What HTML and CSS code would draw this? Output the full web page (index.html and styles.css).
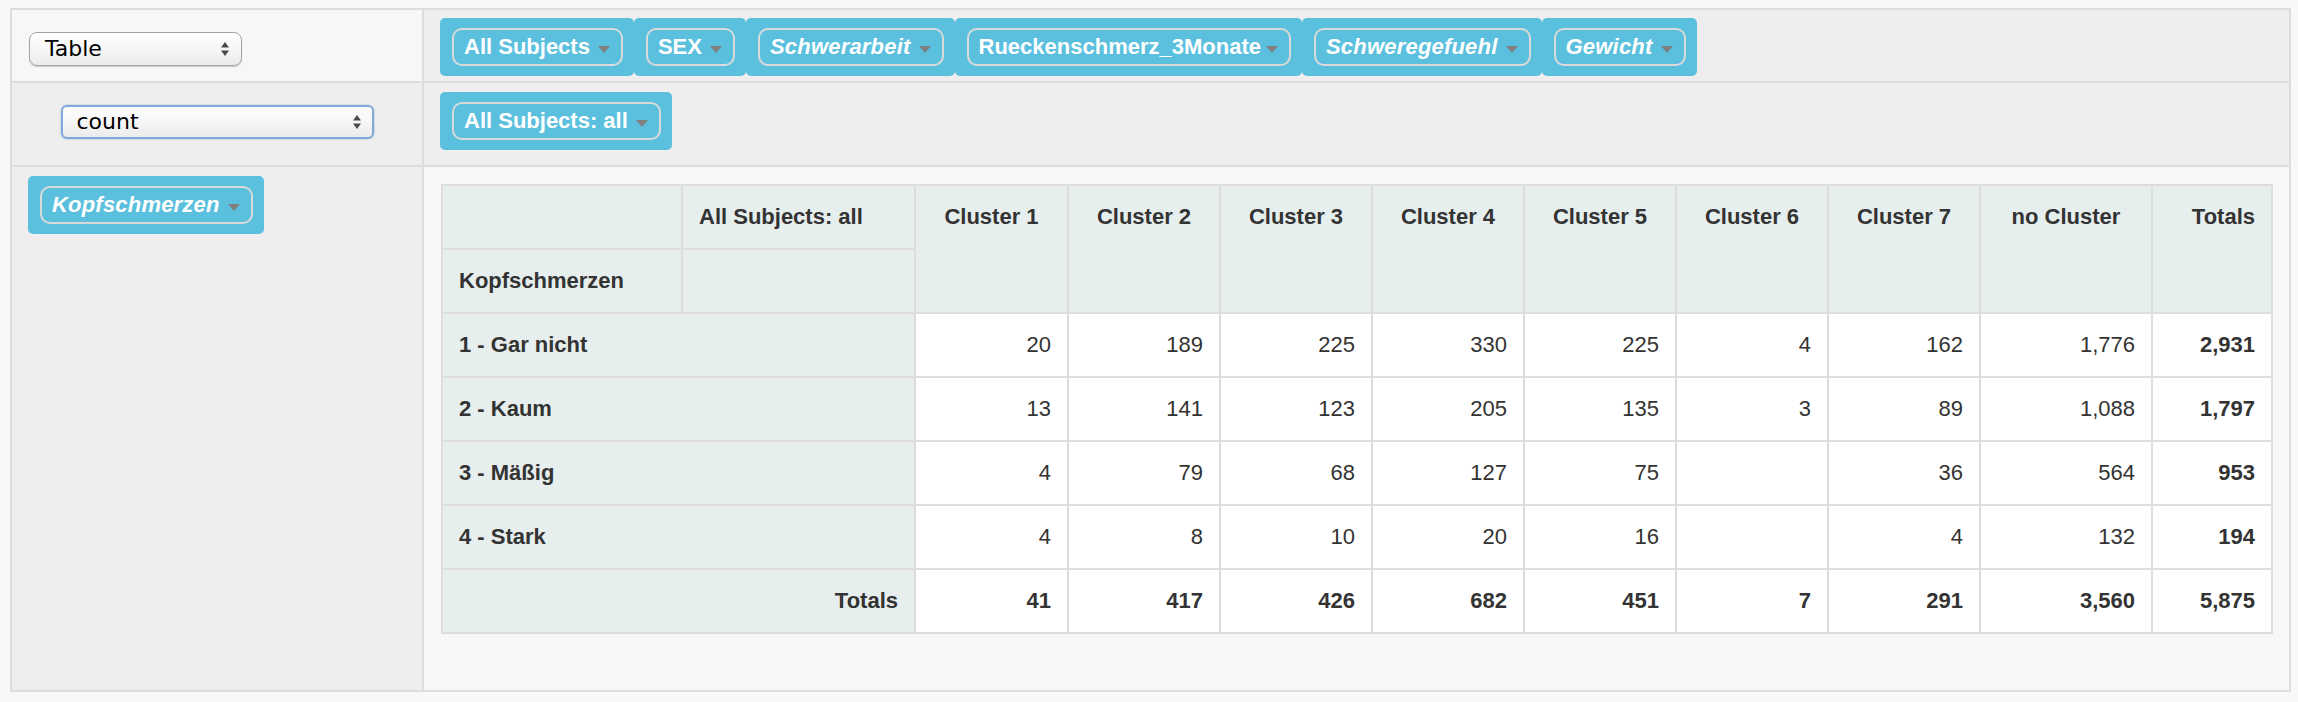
FILE: index.html
```html
<!DOCTYPE html>
<html lang="de">
<head>
<meta charset="utf-8">
<title>Pivot Table</title>
<link rel="stylesheet" href="styles.css">
</head>
<body>
<div class="pvt-ui">
  <div class="cell cell-renderer">
    <div class="select select-renderer">
      <span class="select-text">Table</span>
      <svg class="select-arrows" width="8" height="14" viewBox="0 0 8 14"><polygon points="0,5.5 4,0 8,5.5"/><polygon points="0,8.5 4,14 8,8.5"/></svg>
    </div>
  </div>
  <div class="cell axis axis-unused">
    <ul class="pill-list">
      <li class="pill"><span class="pill-attr">All Subjects<span class="tri"></span></span></li>
      <li class="pill"><span class="pill-attr">SEX<span class="tri"></span></span></li>
      <li class="pill"><span class="pill-attr italic">Schwerarbeit<span class="tri"></span></span></li>
      <li class="pill"><span class="pill-attr tight">Rueckenschmerz_3Monate<span class="tri"></span></span></li>
      <li class="pill"><span class="pill-attr italic">Schweregefuehl<span class="tri"></span></span></li>
      <li class="pill"><span class="pill-attr italic">Gewicht<span class="tri"></span></span></li>
    </ul>
  </div>
  <div class="cell cell-vals">
    <div class="select select-agg">
      <span class="select-text">count</span>
      <svg class="select-arrows" width="8" height="14" viewBox="0 0 8 14"><polygon points="0,5.5 4,0 8,5.5"/><polygon points="0,8.5 4,14 8,8.5"/></svg>
    </div>
  </div>
  <div class="cell axis axis-cols">
    <ul class="pill-list">
      <li class="pill"><span class="pill-attr">All Subjects: all<span class="tri"></span></span></li>
    </ul>
  </div>
  <div class="cell axis axis-rows">
    <ul class="pill-list">
      <li class="pill"><span class="pill-attr italic">Kopfschmerzen<span class="tri"></span></span></li>
    </ul>
  </div>
  <div class="cell renderer-area">
    <div class="pvt-table">
      <div class="th"></div>
      <div class="th">All Subjects: all</div>
      <div class="th col-label">Cluster 1</div>
      <div class="th col-label">Cluster 2</div>
      <div class="th col-label">Cluster 3</div>
      <div class="th col-label">Cluster 4</div>
      <div class="th col-label">Cluster 5</div>
      <div class="th col-label">Cluster 6</div>
      <div class="th col-label">Cluster 7</div>
      <div class="th col-label">no Cluster</div>
      <div class="th col-label total-label">Totals</div>
      <div class="th">Kopfschmerzen</div>
      <div class="th"></div>

      <div class="th row-label">1 - Gar nicht</div>
      <div class="td">20</div><div class="td">189</div><div class="td">225</div><div class="td">330</div><div class="td">225</div><div class="td">4</div><div class="td">162</div><div class="td">1,776</div><div class="td total">2,931</div>

      <div class="th row-label">2 - Kaum</div>
      <div class="td">13</div><div class="td">141</div><div class="td">123</div><div class="td">205</div><div class="td">135</div><div class="td">3</div><div class="td">89</div><div class="td">1,088</div><div class="td total">1,797</div>

      <div class="th row-label">3 - Mäßig</div>
      <div class="td">4</div><div class="td">79</div><div class="td">68</div><div class="td">127</div><div class="td">75</div><div class="td"></div><div class="td">36</div><div class="td">564</div><div class="td total">953</div>

      <div class="th row-label">4 - Stark</div>
      <div class="td">4</div><div class="td">8</div><div class="td">10</div><div class="td">20</div><div class="td">16</div><div class="td"></div><div class="td">4</div><div class="td">132</div><div class="td total">194</div>

      <div class="th row-label total-label">Totals</div>
      <div class="td total">41</div><div class="td total">417</div><div class="td total">426</div><div class="td total">682</div><div class="td total">451</div><div class="td total">7</div><div class="td total">291</div><div class="td total">3,560</div><div class="td total">5,875</div>
    </div>
  </div>
</div>
</body>
</html>
```

FILE: styles.css
```css
html, body {
  background: #f8f8f8;
}
body {
  margin: 8px 0 0 10px;
  font-family: "Liberation Sans", Arial, sans-serif;
  color: #333;
}

.pvt-ui {
  display: grid;
  grid-template-columns: 410px 1fr;
  grid-template-rows: 71px 82px 523px;
  gap: 2px;
  padding: 2px;
  background: #dddddd;
  width: 2281px;
  box-sizing: border-box;
}

.cell {
  background: #eeeeee;
  box-sizing: border-box;
}
.cell-renderer {
  background: #f7f7f7;
  padding: 21px 0 0 17px;
}
.cell-vals {
  display: flex;
  justify-content: center;
  align-items: flex-start;
  padding-top: 22px;
}
.axis-unused {
  padding: 8px 0 0 16px;
}
.axis-cols {
  padding: 9px 0 0 16px;
}
.axis-rows {
  padding: 9px 0 0 16px;
}
.renderer-area {
  background: #f7f7f7;
  padding: 17px 0 0 17px;
}

/* selects */
.select {
  display: flex;
  align-items: center;
  justify-content: space-between;
  height: 34px;
  box-sizing: border-box;
  border: 1px solid #a4a4a4;
  border-radius: 8px;
  background: linear-gradient(#ffffff 0%, #f7f7f7 45%, #ebebeb 100%);
  box-shadow: 0 1px 1px rgba(0, 0, 0, 0.18);
  padding: 0 12px 0 15px;
  font-family: "DejaVu Sans", Verdana, sans-serif;
  font-size: 22px;
  color: #000;
}
.select-renderer {
  width: 213px;
  margin-top: 1px;
}
.select-agg {
  width: 313px;
  border: 2px solid #80a8da;
  border-radius: 6px;
  box-shadow: 0 0 2px rgba(90, 140, 210, 0.6);
  padding: 0 11px 0 14px;
}
.select-text {
  line-height: 26px;
}
.select-arrows {
  fill: #4a4a4a;
  flex: none;
}

/* attribute pills */
.pill-list {
  display: flex;
  margin: 0;
  padding: 0;
  list-style: none;
}
.pill {
  background: #5bc0de;
  border-radius: 5px;
  padding: 10px 11px 10px 12px;
}
.pill-attr {
  display: inline-flex;
  align-items: center;
  gap: 8px;
  border: 2px solid #dadada;
  border-radius: 10px;
  padding: 4px 11px 4px 10px;
  line-height: 26px;
  font-size: 22px;
  font-weight: bold;
  color: #ffffff;
  white-space: nowrap;
}
.pill-attr.italic {
  font-style: italic;
  letter-spacing: 0.2px;
}
.pill-attr.tight {
  gap: 5px;
  padding-right: 11px;
}
.tri {
  width: 0;
  height: 0;
  border-left: 6px solid transparent;
  border-right: 6px solid transparent;
  border-top: 7px solid #7f7f7f;
  margin-top: 5px;
}

/* pivot table */
.pvt-table {
  display: grid;
  grid-template-columns: 240px 233px 153px repeat(6, 152px) 172px 120px;
  grid-auto-rows: 64px;
  width: max-content;
  border-top: 2px solid #dddddd;
  border-left: 2px solid #dddddd;
  font-size: 22px;
  line-height: 24px;
}
.pvt-table > div {
  border-right: 2px solid #dddddd;
  border-bottom: 2px solid #dddddd;
  padding: 19px 16px;
  white-space: nowrap;
  overflow: hidden;
}
.th {
  background: #e6eeee;
  font-weight: bold;
  color: #333;
  text-align: left;
}
.col-label {
  grid-row: span 2;
  text-align: center;
}
.row-label {
  grid-column: span 2;
}
.total-label {
  text-align: right;
}
.td {
  background: #ffffff;
  color: #333;
  text-align: right;
}
.td.total {
  font-weight: bold;
}
```
